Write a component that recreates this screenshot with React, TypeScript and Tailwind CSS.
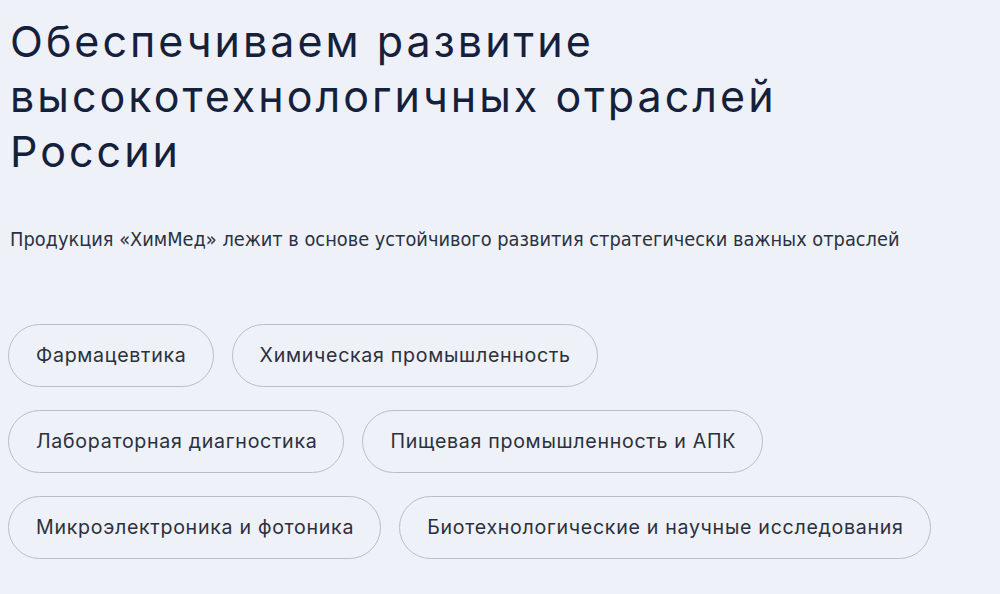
const TAGS = [
  ['Фармацевтика', 'Химическая промышленность'],
  ['Лабораторная диагностика', 'Пищевая промышленность и АПК'],
  ['Микроэлектроника и фотоника', 'Биотехнологические и научные исследования'],
]

export default function App() {
  return (
    <div className="min-h-[594px] bg-[#eef1f8] pl-[10px] pt-[14px] overflow-hidden">
      <h1 className="text-[43px] leading-[55px] text-[#15213b] font-normal tracking-[3px] font-['Inter',sans-serif]">
        Обеспечиваем развитие
        <br />
        высокотехнологичных отраслей
        <br />
        России
      </h1>

      <p className="mt-[49px] text-[19.8px] leading-[24px] text-[#2a3142] font-['DejaVu_Sans_Condensed','DejaVu_Sans',sans-serif]">
        Продукция «ХимМед» лежит в основе устойчивого развития стратегически важных отраслей
      </p>

      <div className="mt-[72px] -ml-[2px] flex flex-col gap-[23px]">
        {TAGS.map((row, i) => (
          <div key={i} className="flex gap-[18px]">
            {row.map(t => (
              <div
                key={t}
                className="h-[63px] pl-[27px] pr-[26px] flex items-center rounded-full border border-[#b9bdc7] text-[19.6px] tracking-[0.7px] text-[#2b303b] font-['Inter',sans-serif]"
              >
                {t}
              </div>
            ))}
          </div>
        ))}
      </div>
    </div>
  )
}
